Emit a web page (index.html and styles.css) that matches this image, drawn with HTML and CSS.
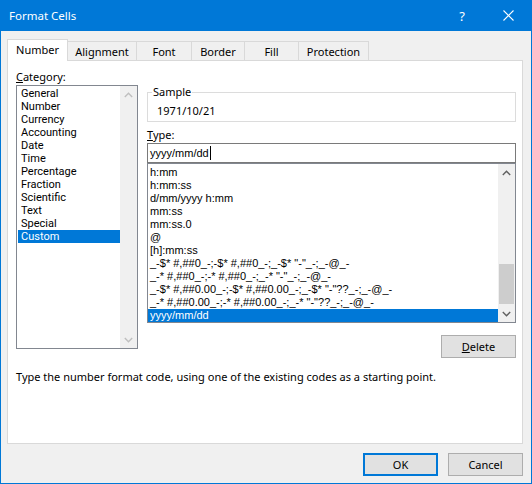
FILE: index.html
```html
<!DOCTYPE html>
<html lang="en">
<head>
    <meta charset="UTF-8">
    <title>Format Cells</title>
    <link rel="stylesheet" href="styles.css">
</head>
<body>

    <div class="window">
        <div class="titlebar">
            <span class="title">Format Cells</span>
            <span class="caption-btn help">?</span>
            <span class="caption-btn close">
                <svg width="11" height="11" viewBox="0 0 11 11"><path d="M0.5 0.5 L10.5 10.5 M10.5 0.5 L0.5 10.5" stroke="#fff" stroke-width="1.1" fill="none"/></svg>
            </span>
        </div>

        <div class="client">
            <div class="tabs">
                <div class="tab active tab-number">Number</div>
                <div class="tab tab-alignment">Alignment</div>
                <div class="tab tab-font">Font</div>
                <div class="tab tab-border">Border</div>
                <div class="tab tab-fill">Fill</div>
                <div class="tab tab-protection">Protection</div>
            </div>

            <div class="panel">
                <div class="columns">
                    <div class="left">
                        <div class="label"><u>C</u>ategory:</div>
                        <div class="listbox category-list">
                            <ul class="items">
                                <li>General</li>
                                <li>Number</li>
                                <li>Currency</li>
                                <li>Accounting</li>
                                <li>Date</li>
                                <li>Time</li>
                                <li>Percentage</li>
                                <li>Fraction</li>
                                <li>Scientific</li>
                                <li>Text</li>
                                <li>Special</li>
                                <li class="selected">Custom</li>
                            </ul>
                            <div class="scrollbar disabled">
                                <div class="arrow"><svg width="9" height="6" viewBox="0 0 9 6"><polyline points="0.8,5 4.5,1.3 8.2,5" /></svg></div>
                                <div class="track"></div>
                                <div class="arrow"><svg width="9" height="6" viewBox="0 0 9 6"><polyline points="0.8,1 4.5,4.7 8.2,1" /></svg></div>
                            </div>
                        </div>
                    </div>

                    <div class="right">
                        <fieldset class="sample">
                            <legend>Sample</legend>
                            <div class="sample-value">1971/10/21</div>
                        </fieldset>

                        <div class="label type-label"><u>T</u>ype:</div>
                        <div class="textbox">yyyy/mm/dd<span class="caret"></span></div>

                        <div class="listbox type-list">
                            <ul class="items">
                                <li>h:mm</li>
                                <li>h:mm:ss</li>
                                <li>d/mm/yyyy h:mm</li>
                                <li>mm:ss</li>
                                <li>mm:ss.0</li>
                                <li>@</li>
                                <li>[h]:mm:ss</li>
                                <li>_-$* #,##0_-;-$* #,##0_-;_-$* "-"_-;_-@_-</li>
                                <li>_-* #,##0_-;-* #,##0_-;_-* "-"_-;_-@_-</li>
                                <li>_-$* #,##0.00_-;-$* #,##0.00_-;_-$* "-"??_-;_-@_-</li>
                                <li>_-* #,##0.00_-;-* #,##0.00_-;_-* "-"??_-;_-@_-</li>
                                <li class="selected">yyyy/mm/dd</li>
                            </ul>
                            <div class="scrollbar">
                                <div class="arrow"><svg width="9" height="6" viewBox="0 0 9 6"><polyline points="0.8,5 4.5,1.3 8.2,5" /></svg></div>
                                <div class="track"><div class="thumb"></div></div>
                                <div class="arrow"><svg width="9" height="6" viewBox="0 0 9 6"><polyline points="0.8,1 4.5,4.7 8.2,1" /></svg></div>
                            </div>
                        </div>

                        <div class="actions">
                            <button class="btn"><u>D</u>elete</button>
                        </div>
                    </div>
                </div>

                <p class="hint">Type the number format code, using one of the existing codes as a starting point.</p>
            </div>

            <div class="footer">
                <button class="btn default">OK</button>
                <button class="btn">Cancel</button>
            </div>
        </div>
    </div>

</body>
</html>
```

FILE: styles.css
```css
body {
    margin: 0;
    background-color: #f0f0f0;
    font-family: 'Noto Sans', 'Open Sans', sans-serif;
    font-size: 11px;
    color: #000;
}
.window {
    width: 532px;
    height: 484px;
    box-sizing: border-box;
    border: 1px solid #0078d7;
    border-top: none;
    background-color: #f0f0f0;
}

/* --- title bar --- */
.titlebar {
    height: 31px;
    background-color: #0078d7;
    color: #fff;
    display: flex;
    align-items: center;
}
.title {
    flex: 1;
    padding-left: 8px;
    font-size: 11.5px;
}
.caption-btn {
    width: 46px;
    height: 31px;
    display: flex;
    justify-content: center;
    align-items: center;
}
.help {
    font-size: 13px;
}
.close svg {
    display: block;
}

/* --- tabs --- */
.client {
    padding: 8px 8px 0 6px;
}
.tabs {
    display: flex;
    align-items: flex-start;
    height: 22px;
    margin-bottom: -1px;
}
.tab {
    box-sizing: border-box;
    height: 19px;
    margin-top: 2px;
    margin-left: -1px;
    border: 1px solid #d9d9d9;
    border-bottom: none;
    display: flex;
    justify-content: center;
    align-items: center;
    padding-top: 1px;
}
.tab.active {
    height: 22px;
    margin-top: 0;
    margin-left: 0;
    background-color: #fff;
    position: relative;
    z-index: 1;
    padding-top: 0;
    padding-bottom: 2px;
}
.tab-number { width: 61px; }
.tab-alignment { width: 70px; }
.tab-font { width: 56px; }
.tab-border { width: 54px; }
.tab-fill { width: 55px; }
.tab-protection { width: 71px; }

/* --- panel --- */
.panel {
    box-sizing: border-box;
    width: 516px;
    height: 384px;
    background-color: #fff;
    border: 1px solid #d9d9d9;
    padding: 8px 6px 0 8px;
}
.columns {
    display: flex;
    gap: 9px;
}
.left {
    width: 122px;
}
.right {
    width: 369px;
}
.label {
    line-height: 16px;
    height: 16px;
}

.listbox {
    box-sizing: border-box;
    border: 1px solid #828790;
    display: flex;
    background-color: #fff;
}
.items {
    list-style: none;
    margin: 0;
    padding: 0;
    flex: 1;
    overflow: hidden;
}
.items li {
    height: 13px;
    line-height: 13px;
    white-space: nowrap;
}
.items li.selected {
    background-color: #0078d7;
    color: #fff;
}

.category-list {
    height: 264px;
    font-family: Roboto, 'Noto Sans', sans-serif;
    font-size: 11px;
}
.category-list .items {
    padding: 1px 0 0 1px;
}
.category-list .items li {
    padding-left: 3px;
}

.scrollbar {
    width: 17px;
    background-color: #f0f0f0;
    display: flex;
    flex-direction: column;
}
.scrollbar .arrow {
    height: 17px;
    display: flex;
    justify-content: center;
    align-items: center;
}
.scrollbar svg polyline {
    fill: none;
    stroke: #606060;
    stroke-width: 1.4;
}
.scrollbar.disabled svg polyline {
    stroke: #bfbfbf;
}
.scrollbar .track {
    flex: 1;
    display: flex;
    flex-direction: column;
    justify-content: flex-end;
}
.thumb {
    height: 40px;
    margin: 0 1px 1px 1px;
    background-color: #cdcdcd;
}

/* sample group */
.sample {
    margin: 16px 0 0 0;
    padding: 4px 8px 2px 9px;
    border: 1px solid #dcdcdc;
    min-width: 0;
}
.sample legend {
    margin-left: -5px;
    padding: 0 1px;
    line-height: 14px;
}
.sample-value {
    line-height: 16px;
}

.type-label {
    margin-top: 5px;
}
.textbox {
    box-sizing: border-box;
    height: 20px;
    border: 1px solid #7a7a7a;
    padding-left: 2px;
    font-family: 'Liberation Sans', Arial, sans-serif;
    font-size: 11px;
    line-height: 18px;
    display: flex;
    align-items: center;
}
.caret {
    display: inline-block;
    width: 1px;
    height: 14px;
    background-color: #000;
    margin-left: 1px;
}

.type-list {
    height: 160px;
    font-family: 'Liberation Sans', Arial, sans-serif;
    font-size: 11px;
}
.type-list .items {
    padding-top: 2px;
}
.type-list .items li {
    padding-left: 2px;
}

.actions {
    display: flex;
    justify-content: flex-end;
    margin-top: 12px;
}

.btn {
    box-sizing: border-box;
    width: 75px;
    height: 23px;
    padding: 0;
    font-family: inherit;
    font-size: 11px;
    color: #000;
    background-color: #e1e1e1;
    border: 1px solid #adadad;
}
.btn.default {
    border: 2px solid #0078d7;
}

.hint {
    margin: 11px 0 0 0;
    line-height: 16px;
}

/* --- footer buttons --- */
.footer {
    display: flex;
    justify-content: flex-end;
    gap: 10px;
    margin-top: 9px;
}
```
